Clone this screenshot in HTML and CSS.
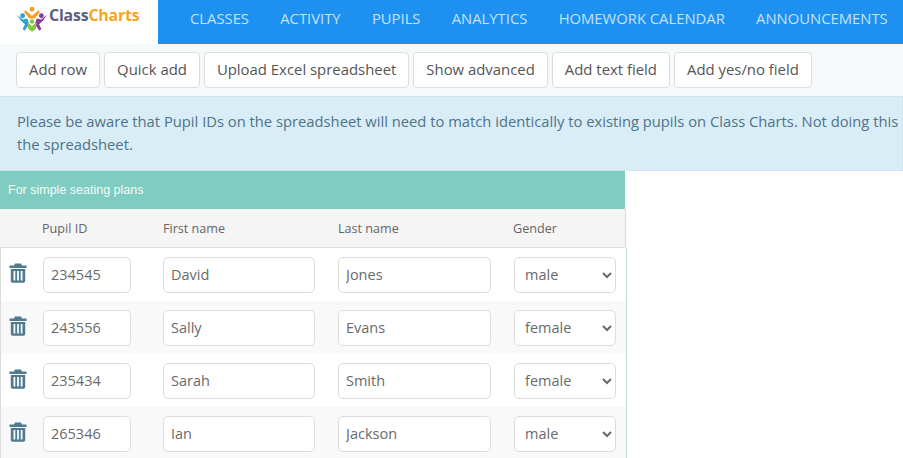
FILE: index.html
```html
<!DOCTYPE html>
<html lang="en">
<head>
<meta charset="utf-8">
<title>Class Charts</title>
<link rel="stylesheet" href="styles.css">
</head>
<body>
<header class="topbar">
  <div class="brand">
    <svg class="brand-mark" viewBox="0 0 32 28" aria-hidden="true">
      <circle cx="16" cy="3" r="2.6" fill="#f5a02a"/>
      <path d="M9 4 L16 10 L23 4 L24.5 6 L19 13 L13 13 L7.500 6 Z" fill="#f5a02a"/>
      <circle cx="6" cy="10" r="2.6" fill="#2f9fd8"/>
      <path d="M0 9 L6 14 L11 13 L13 19 L8 26 L6 24 L8.500 19 L4 15 Z" fill="#2f9fd8"/>
      <circle cx="26" cy="10" r="2.600" fill="#8a3d9c"/>
      <path d="M32 9 L26 14 L21 13 L19 19 L24 26 L26 24 L23.500 19 L28 15 Z" fill="#8a3d9c"/>
      <path d="M11 17 L16 21 L21 17 L20 24 L16 27 L12 24 Z" fill="#8cc63f"/>
      <circle cx="16" cy="16" r="2.400" fill="#8cc63f"/>
    </svg>
    <span class="brand-name"><span class="brand-class">Class</span><span class="brand-charts">Charts</span></span>
  </div>
  <nav class="mainnav">
    <a>Classes</a>
    <a>Activity</a>
    <a>Pupils</a>
    <a>Analytics</a>
    <a>Homework calendar</a>
    <a>Announcements</a>
  </nav>
</header>

<div class="toolbar">
  <button class="btn">Add row</button>
  <button class="btn">Quick add</button>
  <button class="btn">Upload Excel spreadsheet</button>
  <button class="btn">Show advanced</button>
  <button class="btn">Add text field</button>
  <button class="btn">Add yes/no field</button>
</div>

<div class="alert">Please be aware that Pupil IDs on the spreadsheet will need to match identically to existing pupils on Class Charts. Not doing this c<br>the spreadsheet.</div>

<section class="panel">
  <div class="panel-title">For simple seating plans</div>
  <div class="row head">
    <span class="col-del"></span>
    <span class="col-id">Pupil ID</span>
    <span class="col-first">First name</span>
    <span class="col-last">Last name</span>
    <span class="col-gender">Gender</span>
  </div>

  <div class="row">
    <span class="col-del"><svg class="trash" viewBox="0 0 18 20" aria-hidden="true"><use href="#trash"/></svg></span>
    <input class="field col-id" value="234545">
    <input class="field col-first" value="David">
    <input class="field col-last" value="Jones">
    <select class="field col-gender"><option selected>male</option><option>female</option></select>
  </div>
  <div class="row">
    <span class="col-del"><svg class="trash" viewBox="0 0 18 20" aria-hidden="true"><use href="#trash"/></svg></span>
    <input class="field col-id" value="243556">
    <input class="field col-first" value="Sally">
    <input class="field col-last" value="Evans">
    <select class="field col-gender"><option>male</option><option selected>female</option></select>
  </div>
  <div class="row">
    <span class="col-del"><svg class="trash" viewBox="0 0 18 20" aria-hidden="true"><use href="#trash"/></svg></span>
    <input class="field col-id" value="235434">
    <input class="field col-first" value="Sarah">
    <input class="field col-last" value="Smith">
    <select class="field col-gender"><option>male</option><option selected>female</option></select>
  </div>
  <div class="row">
    <span class="col-del"><svg class="trash" viewBox="0 0 18 20" aria-hidden="true"><use href="#trash"/></svg></span>
    <input class="field col-id" value="265346">
    <input class="field col-first" value="Ian">
    <input class="field col-last" value="Jackson">
    <select class="field col-gender"><option selected>male</option><option>female</option></select>
  </div>
</section>

<svg class="defs" aria-hidden="true">
  <symbol id="trash" viewBox="0 0 18 20">
    <path fill-rule="evenodd" d="M6 0.500H12L13 2.500H17.500V5H0.500V2.500H5Z"/>
    <path fill-rule="evenodd" d="M1.800 6H16.200V18C16.200 19 15.500 19.700 14.500 19.700H3.500C2.500 19.700 1.800 19 1.800 18ZM4.500 8V17.500H6.300V8ZM8.100 8V17.500H9.900V8ZM11.700 8V17.500H13.500V8Z"/>
  </symbol>
</svg>
</body>
</html>
```
FILE: styles.css
```css
* { box-sizing: border-box; }
html, body { margin: 0; padding: 0; height: 458px; overflow: hidden; background: #fff; }
body { font-family: "Open Sans", sans-serif; color: #555; width: 903px; }

.topbar { display: flex; height: 44px; }
.brand { width: 158px; flex: none; display: flex; align-items: center; padding: 0 0 14px 17px; gap: 2px; background: #fff; }
.brand-mark { width: 30px; height: 27px; flex: none; margin-top: 8px; margin-bottom: -1px; }
.brand-name { font-family: "Open Sans", sans-serif; font-weight: 700; font-size: 15.900px; letter-spacing: -0.2px; }
.brand-class { color: #5c5f7e; }
.brand-charts { color: #f5a623; }

.mainnav { flex: 1; display: flex; gap: 31.300px; padding: 0 0 8px 32px; align-items: center; background: #1e90f0; white-space: nowrap; overflow: hidden; }
.mainnav a { color: #c4e2fb; font-size: 14.800px; text-transform: uppercase; }

.toolbar { height: 52px; display: flex; gap: 4px; padding: 8px 16px 0; background: #f5f9fa; }
.btn { height: 36px; padding: 0 12px 3px; background: #fff; border: 1px solid #ddd; border-radius: 4px; font-family: inherit; font-size: 14.900px; color: #555; white-space: nowrap; }

.alert { height: 75px; padding: 13px 16px 0 17px; background: #d9edf7; border: 1px solid #d0e4ee; border-left: 0; font-size: 14.750px; line-height: 23px; color: #4f7389; white-space: nowrap; overflow: hidden; }

.panel { width: 627px; }
.panel-title { width: 625px; height: 38px; padding-left: 8px; display: flex; align-items: center; background: #7fccc1; color: #f2fbf9; font-family: "Liberation Sans", sans-serif; font-size: 12.500px; }

.row { display: flex; align-items: center; height: 53px; background: #fff; border-left: 1px solid #ddd; border-right: 1px solid #b8e0da; }
.row:nth-child(even) { background: #f9f9f9; }
.row.head { height: 39px; width: 626px; background: #f5f5f5; border-left: 0; border-right-color: #c5e2de; border-bottom: 1px solid #ddd; font-size: 12.600px; color: #666; }
.col-del { width: 42px; flex: none; display: flex; padding-left: 8px; }
.col-id { width: 88px; flex: none; margin-right: 32px; }
.col-first { width: 152px; flex: none; margin-right: 23px; }
.col-last { width: 153px; flex: none; margin-right: 23px; }
.col-gender { width: 102px; flex: none; }
.head .col-id { margin-right: 33px; }
.head .col-last { margin-right: 22px; }

.trash { width: 18px; height: 20px; fill: #4f7a90; margin-bottom: 4px; }
.field { height: 36px; padding: 0 6px; background: #fff; border: 1px solid #dcdcdc; border-radius: 5px; font-family: inherit; font-size: 14.500px; color: #6a6a6a; }
select.field { padding: 0 6px; }
input.field { padding: 0 6px 0 7px; }
.defs { display: none; }
```
